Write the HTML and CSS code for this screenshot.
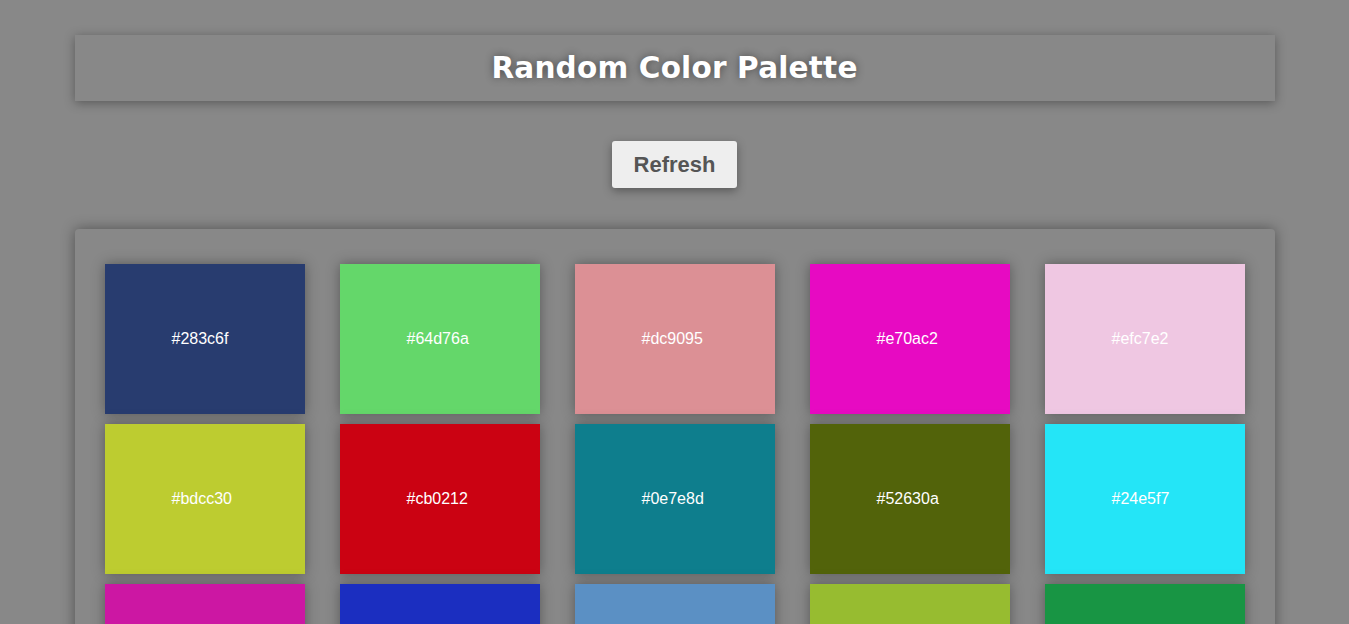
FILE: index.html
```html
<!DOCTYPE html>
<html lang="en">
<head>
<meta charset="utf-8">
<title>Random Color Palette</title>
<link rel="stylesheet" href="styles.css">
</head>
<body>
<header class="header">
  <h1 class="title">Random Color Palette</h1>
</header>
<div class="actions">
  <button class="refresh">Refresh</button>
</div>
<main class="palette">
  <div class="swatch" style="background:#283c6f"><span class="code">#283c6f</span></div>
  <div class="swatch" style="background:#64d76a"><span class="code">#64d76a</span></div>
  <div class="swatch" style="background:#dc9095"><span class="code">#dc9095</span></div>
  <div class="swatch" style="background:#e70ac2"><span class="code">#e70ac2</span></div>
  <div class="swatch" style="background:#efc7e2"><span class="code">#efc7e2</span></div>
  <div class="swatch" style="background:#bdcc30"><span class="code">#bdcc30</span></div>
  <div class="swatch" style="background:#cb0212"><span class="code">#cb0212</span></div>
  <div class="swatch" style="background:#0e7e8d"><span class="code">#0e7e8d</span></div>
  <div class="swatch" style="background:#52630a"><span class="code">#52630a</span></div>
  <div class="swatch" style="background:#24e5f7"><span class="code">#24e5f7</span></div>
  <div class="swatch" style="background:#cc17a3"><span class="code">#cc17a3</span></div>
  <div class="swatch" style="background:#1b2ec0"><span class="code">#1b2ec0</span></div>
  <div class="swatch" style="background:#5b90c4"><span class="code">#5b90c4</span></div>
  <div class="swatch" style="background:#97bc30"><span class="code">#97bc30</span></div>
  <div class="swatch" style="background:#189544"><span class="code">#189544</span></div>
</main>
</body>
</html>
```
FILE: styles.css
```css
html, body {
  margin: 0;
  padding: 0;
}
body {
  background: #888888;
  font-family: "Liberation Sans", Arial, sans-serif;
  padding-top: 35px;
}
.header {
  width: 1200px;
  margin: 0 auto;
  height: 66px;
  display: flex;
  align-items: center;
  justify-content: center;
  background: #888888;
  box-shadow: 0 2px 10px rgba(0, 0, 0, 0.35);
}
.title {
  margin: 0;
  font-family: "DejaVu Sans", Verdana, sans-serif;
  font-weight: bold;
  font-size: 29.5px;
  color: #ffffff;
  text-shadow: 0 0 8px rgba(0, 0, 0, 0.45);
  letter-spacing: 0.2px;
}
.actions {
  display: flex;
  justify-content: center;
  margin: 40px 0 41px;
}
.refresh {
  width: 125px;
  height: 47px;
  padding: 0;
  border: none;
  border-radius: 3px;
  background: #eeeeee;
  color: #555555;
  font-family: "Liberation Sans", Arial, sans-serif;
  font-weight: bold;
  font-size: 22px;
  box-shadow: 0 3px 10px rgba(0, 0, 0, 0.35);
  cursor: pointer;
}
.palette {
  width: 1200px;
  box-sizing: border-box;
  margin: 0 auto 40px;
  padding: 35px 30px 30px;
  border-radius: 4px;
  background: #888888;
  box-shadow: 0 0 14px rgba(0, 0, 0, 0.4);
  display: grid;
  grid-template-columns: repeat(5, 200px);
  column-gap: 35px;
  row-gap: 10px;
}
.swatch {
  width: 200px;
  height: 150px;
  display: flex;
  align-items: center;
  justify-content: center;
  color: #ffffff;
  font-size: 16px;
  box-shadow: 0 0 12px rgba(0, 0, 0, 0.35);
}
.code {
  width: 66px;
  text-align: left;
  white-space: nowrap;
}
```
